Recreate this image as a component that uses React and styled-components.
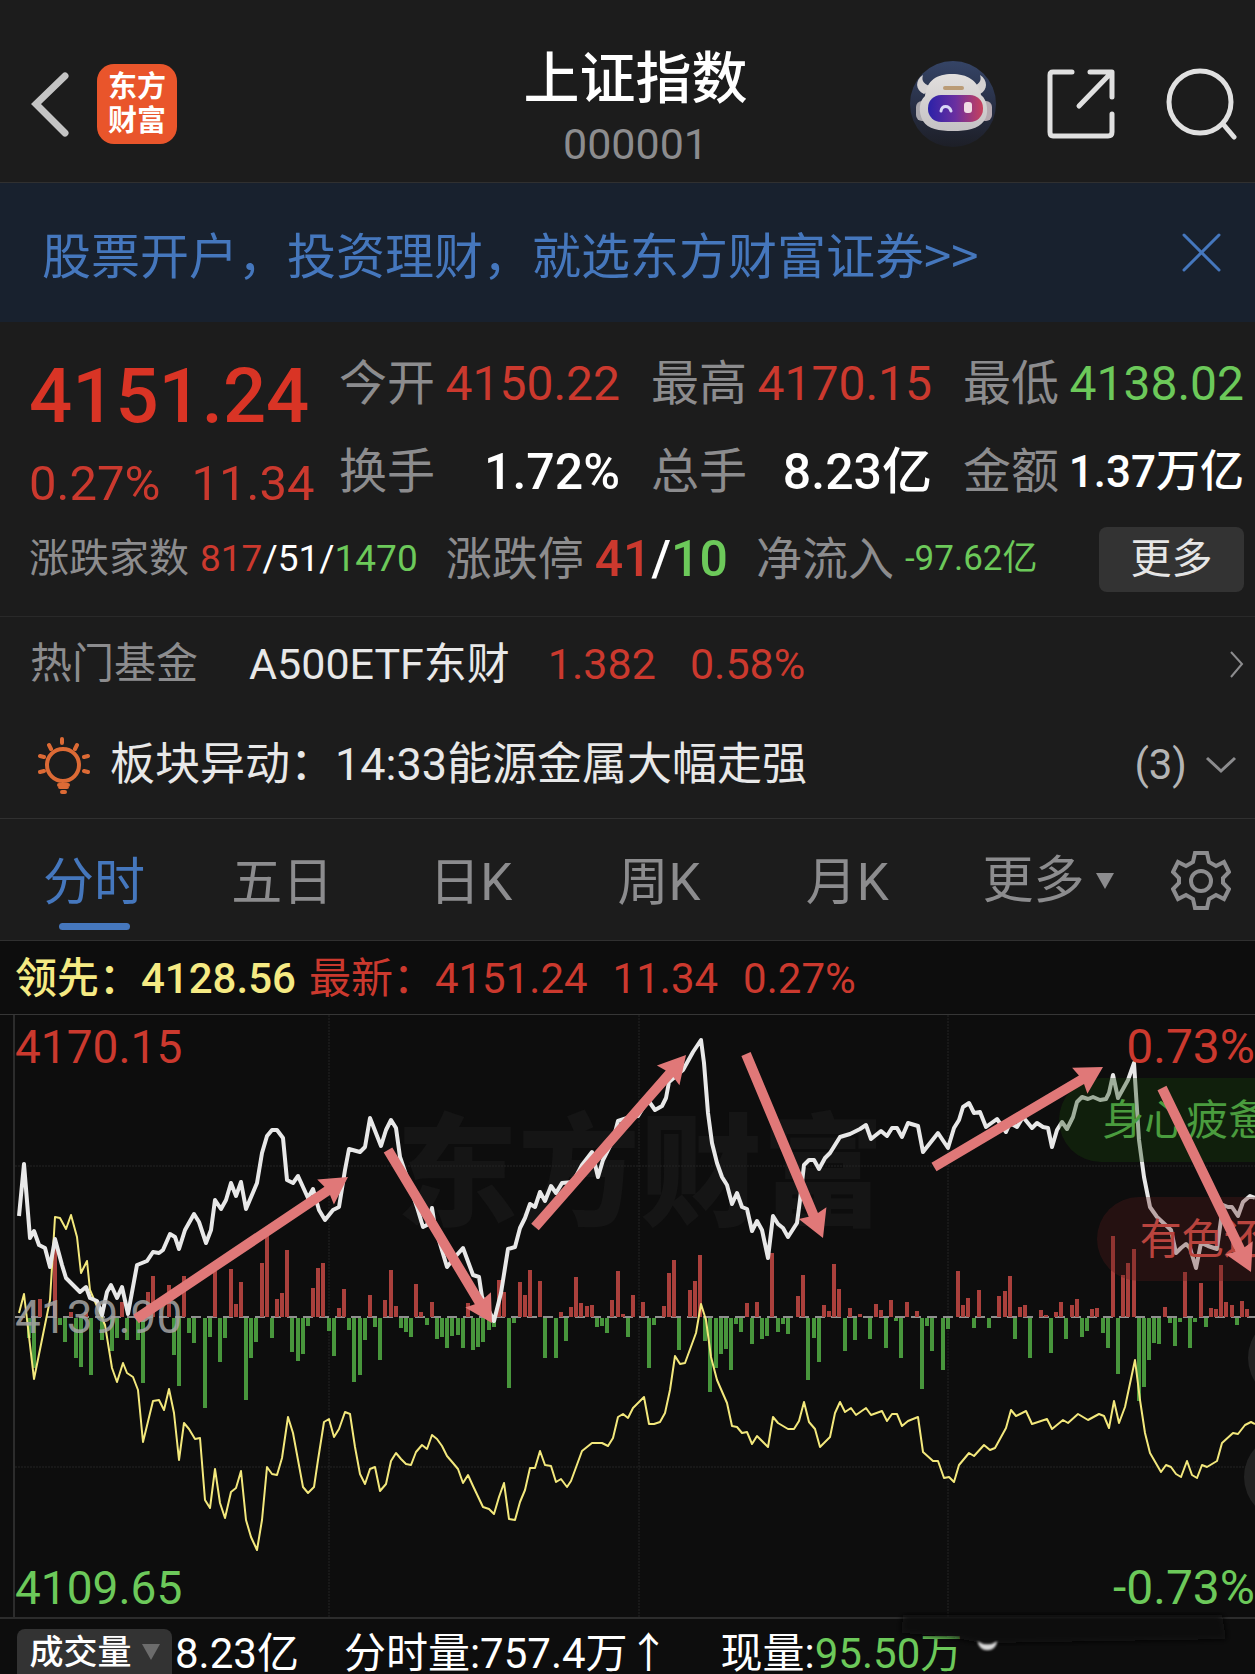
import React, { useState } from 'react'
import styled, { createGlobalStyle } from 'styled-components'

const red = '#cb392e'
const green = '#6cc95a'
const grey = '#8c8c8e'
const blue = '#4577bd'
const line = '#303030'
const panel = '#1c1c1c'
const dark = '#0d0d0d'

const GlobalStyle = createGlobalStyle`
* {
    box-sizing: border-box;
}
body {
    margin: 0;
    background: ${dark};
    color: #fff;
    font-family: Roboto, "Noto Sans CJK SC", sans-serif;
}
button {
    margin: 0;
    padding: 0;
    border: 0;
    background: none;
    color: inherit;
    font: inherit;
    cursor: pointer;
}
svg {
    display: block;
}
h1, p, dl, dt, dd {
    margin: 0;
    font-weight: 400;
}
`

const Page = styled.main`
display: flex;
flex-direction: column;
overflow: hidden;
white-space: nowrap;
`

const Header = styled.header`
display: grid;
grid-template-columns: 1fr auto 1fr;
height: 183px;
padding: 25px 18px 0 30px;
background: ${panel};
border-bottom: 1px solid ${line};
`

const HeaderSide = styled.div`
display: flex;
align-items: center;
justify-content: ${props => props.$end ? 'flex-end' : 'flex-start'};
gap: ${props => props.$end ? '50px' : '26px'};
`

const Logo = styled.a`
display: flex;
flex-direction: column;
align-items: center;
justify-content: center;
width: 80px;
height: 80px;
border-radius: 17px;
background: #e9552b;
color: #fff;
font-size: 29px;
line-height: 34px;
font-weight: 700;
text-decoration: none;
`

const Title = styled.div`
display: flex;
flex-direction: column;
align-items: center;
padding-left: 4px;
h1{
font-size: 56px;
line-height: 64px;
padding-top: 22px;
font-weight: 500;
}
p{
color: ${grey};
font-size: 43px;
line-height: 66px;
}
`

const Banner = styled.section`
display: flex;
align-items: center;
justify-content: space-between;
height: 139px;
padding: 0 34px 0 42px;
background: #18212e;
color: ${blue};
a{
color: inherit;
font-family: "Noto Sans CJK SC", sans-serif;
font-size: 49px;
line-height: 64px;
text-decoration: none;
}
`

const Quote = styled.section`
display: flex;
flex-direction: column;
padding: 15px 11px 14px 29px;
background: ${panel};
border-bottom: 1px solid #292929;
`

const QuoteTop = styled.div`
display: flex;
`

const Price = styled.div`
display: flex;
flex-direction: column;
gap: 28px;
flex: none;
width: 310px;
padding-top: 29px;
color: ${red};
line-height: 60px;
strong{
font-size: 76px;
font-weight: 500;
color: #d93425;
}
p{
display: flex;
gap: 31px;
font-size: 49px;
}
`

const Stats = styled.dl`
display: grid;
flex: 1;
grid-template-columns: repeat(3, 1fr);
column-gap: 31px;
padding-top: 3px;
line-height: 88px;
div{
display: flex;
justify-content: space-between;
}
dt{
color: ${grey};
font-size: 48px;
}
`

const Value = styled.dd`
color: ${props => props.$color || '#fff'};
font-size: ${props => props.$size || 48}px;
font-weight: ${props => props.$color ? 400 : 500};
`

const Breadth = styled.div`
display: flex;
align-items: center;
gap: 28px;
height: 86px;
line-height: 60px;
`

const BreadthItem = styled.p`
display: flex;
align-items: center;
gap: 11px;
color: ${grey};
font-size: ${props => props.$label}px;
span{
font-size: ${props => props.$value}px;
font-weight: ${props => props.$value > 40 ? 500 : 400};
}
`

const Tint = styled.i`
font-style: normal;
color: ${props => props.$color};
`

const MoreButton = styled.button`
width: 145px;
height: 65px;
margin-left: auto;
border-radius: 8px;
background: #333;
color: #e6e6e6;
font-size: 41px;
line-height: 60px;
`

const FundRow = styled.a`
display: flex;
align-items: center;
height: 92px;
padding: 2px 11px 0 30px;
background: ${panel};
color: ${red};
font-size: 43px;
line-height: 60px;
text-decoration: none;
small{
font-size: 42px;
color: ${grey};
margin-right: 51px;
}
b{
font-weight: 400;
color: #e8e8e8;
margin-right: 38px;
}
span{
margin-right: 34px;
}
svg{
margin-left: auto;
}
`

const AlertRow = styled.div`
display: flex;
align-items: center;
height: 110px;
padding: 2px 18px 0 36px;
background: ${panel};
border-bottom: 1px solid ${line};
color: #e8e8e8;
font-size: 45px;
line-height: 60px;
p{
padding-left: 17px;
}
button{
display: flex;
align-items: center;
gap: 18px;
margin-left: auto;
color: #b4b4b4;
font-size: 42px;
}
`

const Tabs = styled.nav`
display: grid;
grid-template-columns: repeat(6, 3fr) 2fr;
height: 122px;
background: ${panel};
border-bottom: 1px solid ${line};
`

const Tab = styled.button`
display: flex;
flex-direction: column;
align-items: center;
padding-top: 28px;
color: ${props => props.$on ? blue : grey};
font-size: 51px;
line-height: 72px;
&::after{
content: "";
width: 71px;
height: 7px;
margin-top: 4px;
border-radius: 4px;
background: ${props => props.$on ? blue : 'transparent'};
}
`

const TabMore = styled.button`
display: flex;
align-items: center;
justify-content: flex-end;
gap: 11px;
padding: 2px 16px 0 0;
color: ${grey};
font-size: 51px;
line-height: 72px;
`

const GearButton = styled.button`
display: flex;
align-items: center;
justify-content: flex-end;
padding-right: 24px;
`

const Legend = styled.div`
display: flex;
align-items: center;
height: 74px;
padding: 2px 0 0 15px;
border-bottom: 1px solid #363636;
color: ${red};
font-size: 42px;
line-height: 60px;
span{
margin-right: 25px;
}
span:first-child{
margin-right: 13px;
color: #f5ea83;
font-weight: 500;
}
`

const Chart = styled.section`
position: relative;
border-bottom: 2px solid #2c2c2c;
svg{
width: 100%;
}
`

const AxisLabel = styled.span`
position: absolute;
color: ${props => props.$color};
font-size: 46px;
line-height: 46px;
${props => props.$right ? 'right: 0;' : 'left: 15px;'}
${props => props.$right && 'font-size: 48px;'}
${props => props.$at}
`

const Bullet = styled.span`
position: absolute;
top: ${props => props.$top};
left: ${props => props.$left};
right: 0;
height: 84px;
padding-left: 43px;
border-radius: 42px 0 0 42px;
background: ${props => props.$back};
color: ${props => props.$color};
font-size: 42px;
line-height: 86px;
overflow: hidden;
`

const Arrows = styled.svg`
position: absolute;
top: 0;
left: 0;
`

const Volume = styled.footer`
position: relative;
display: flex;
align-items: flex-end;
height: 56px;
font-size: 42px;
line-height: 42px;
font-weight: 500;
p{
margin-right: 45px;
}
p:last-of-type{
margin-left: 6px;
}
`

const VolumeButton = styled.button`
display: flex;
align-items: center;
justify-content: center;
gap: 10px;
width: 155px;
height: 46px;
margin: 0 3px 0 17px;
border-radius: 8px 8px 0 0;
background: #333;
font-size: 34px;
`

const Smudge = styled.svg`
position: absolute;
top: -14px;
left: 71%;
width: 28%;
`

// [minute, size]: up bars stand on the zero line, down bars hang from it
const upBars = [
    [4, 18], [7, 78], [10, 5], [13, 5], [20, 15], [25, 25], [26, 41], [29, 32], [32, 41], [38, 46],
    [41, 48], [42, 13], [43, 35], [47, 54], [48, 83], [50, 18], [51, 24], [52, 67], [57, 29], [58, 49],
    [59, 54], [62, 9], [63, 28], [68, 22], [71, 17], [72, 47], [73, 11], [77, 33], [78, 5], [80, 15],
    [87, 14], [93, 37], [94, 25], [97, 35], [98, 22], [99, 47], [101, 36], [105, 5], [107, 10], [108, 40],
    [109, 14], [110, 11], [111, 12], [115, 17], [116, 46], [117, 3], [119, 22], [121, 15], [125, 11],
    [126, 44], [127, 57], [130, 27], [131, 36], [132, 62], [141, 14], [143, 15], [146, 64], [151, 21],
    [152, 42], [156, 12], [157, 6], [158, 53], [159, 28], [161, 9], [163, 3], [166, 13], [167, 7],
    [169, 17], [172, 15], [174, 6], [182, 46], [183, 12], [184, 19], [186, 27], [190, 21], [191, 26],
    [192, 41], [194, 10], [195, 12], [198, 7], [199, 2], [201, 5], [202, 15], [204, 12], [205, 18],
    [208, 8], [209, 9], [212, 81], [214, 42], [215, 54], [216, 68], [222, 10], [226, 45], [229, 34],
    [231, 9], [232, 8], [233, 52], [234, 15], [235, 12], [237, 16], [238, 8],
]

const downBars = [
    [2, 20], [3, 50], [8, 7], [9, 24], [11, 40], [12, 49], [14, 57], [16, 22], [18, 33], [19, 20],
    [21, 22], [23, 22], [24, 65], [30, 37], [31, 68], [33, 15], [34, 25], [36, 90], [37, 19], [39, 44],
    [40, 20], [44, 82], [45, 40], [46, 24], [49, 20], [53, 34], [54, 43], [55, 36], [56, 8], [60, 13],
    [61, 38], [64, 12], [65, 64], [66, 57], [67, 22], [69, 9], [70, 42], [74, 10], [75, 14], [76, 19],
    [79, 7], [81, 21], [82, 19], [83, 30], [84, 18], [85, 17], [86, 30], [88, 32], [89, 29], [90, 24],
    [91, 12], [92, 9], [95, 70], [96, 5], [102, 40], [104, 40], [106, 23], [112, 9], [113, 8], [114, 15],
    [118, 19], [122, 50], [123, 7], [128, 32], [133, 23], [134, 74], [135, 50], [136, 36], [137, 31],
    [138, 52], [139, 6], [140, 14], [142, 26], [144, 21], [145, 18], [147, 14], [148, 6], [149, 16],
    [153, 62], [154, 20], [155, 44], [160, 33], [162, 22], [165, 21], [168, 30], [170, 3], [171, 40],
    [175, 71], [176, 8], [177, 33], [179, 52], [180, 11], [185, 10], [188, 10], [193, 21], [196, 40],
    [200, 35], [203, 21], [206, 19], [207, 13], [210, 15], [211, 30], [213, 56], [217, 83], [218, 69],
    [219, 42], [220, 25], [221, 26], [223, 5], [224, 28], [225, 4], [227, 30], [228, 4], [230, 9], [236, 7],
]

const pricePoints = `19,201 24,149 30,223 34,216 39,230 45,233 50,252 55,224 62,250 66,263 80,277 86,272
90,283 97,286 102,300 107,277 111,270 117,283 122,272 128,299 137,250 147,246 153,237 159,238 163,235
170,219 175,222 179,234 185,215 194,199 199,207 206,228 211,215 215,185 221,194 226,185 231,168 236,181
241,167 246,194 257,168 262,138 267,121 272,115 277,115 283,123 287,165 293,168 298,161 303,172 308,183
313,174 319,195 325,205 333,195 339,192 345,155 349,134 360,137 365,132 370,103 381,131 386,115 391,105
396,113 400,142 417,192 423,212 427,210 432,193 435,212 447,252 455,242 463,233 473,260 479,262 482,282
494,306 501,278 508,234 515,232 520,213 525,203 530,189 535,192 540,177 545,186 551,171 556,178 562,168
573,167 582,150 592,137 598,162 603,145 613,125 618,106 630,102 638,101 648,85 655,95 662,91 666,83
669,67 683,55 693,37 701,25 704,48 708,98 712,128 717,148 722,162 727,170 732,189 737,178 742,192
747,194 752,216 757,206 762,215 768,243 773,201 778,209 783,213 788,222 797,208 800,185 804,150 809,145
814,145 819,154 825,143 830,138 840,122 850,119 860,114 866,110 871,124 881,116 887,121 892,113 897,113
902,122 908,108 918,111 923,137 938,118 948,133 954,113 959,105 963,92 969,88 974,98 980,97 986,112
997,104 1006,117 1010,108 1017,112 1023,102 1032,113 1037,108 1043,112 1048,113 1052,132 1057,115
1062,107 1067,114 1073,102 1077,87 1082,82 1088,84 1093,82 1100,85 1106,84 1109,78 1113,60 1118,83
1128,65 1134,48 1139,125 1144,162 1150,192 1157,202 1171,215 1176,238 1181,233 1186,229 1190,233
1196,253 1201,228 1208,231 1217,234 1223,190 1228,192 1232,192 1238,201 1243,187 1250,181 1255,183`

const leadPoints = `19,298 24,279 34,364 50,285 55,202 60,203 66,214 71,200 77,222 81,258 87,246 90,275
105,310 112,353 117,367 123,348 127,358 133,362 138,375 143,427 153,386 159,385 164,395 169,374 174,398
179,445 184,408 189,414 195,424 200,423 205,485 210,493 215,454 220,488 225,503 231,477 236,473 241,456
246,505 251,522 257,535 262,505 267,452 272,459 277,460 282,443 288,402 293,418 303,472 308,478 314,472
318,445 324,407 329,404 334,422 339,414 345,397 350,399 355,432 360,459 365,469 370,454 375,452 380,476
386,469 391,446 396,438 401,444 406,449 411,450 416,437 422,430 427,434 432,420 437,424 442,431 447,441
453,448 458,454 463,468 468,460 473,471 483,492 489,494 494,499 499,482 504,468 509,504 515,505 520,487
525,475 530,453 535,453 540,436 545,450 551,451 556,467 561,464 567,472 571,466 582,436 592,428 602,428
608,431 613,423 618,402 623,399 628,403 633,393 644,382 649,409 654,409 660,407 665,398 670,375 675,341
680,349 685,348 696,318 701,289 706,305 711,342 717,365 727,388 732,411 737,412 742,418 747,417 752,429
757,421 768,432 773,402 778,408 788,414 794,414 799,406 804,387 809,407 815,414 820,432 830,422 835,398
840,387 845,397 851,393 856,400 866,393 871,400 882,396 887,406 892,399 897,399 902,411 908,406 918,402
923,437 933,446 938,446 944,463 949,462 954,467 959,450 969,438 974,441 984,430 990,435 995,433
1006,413 1011,395 1016,401 1026,396 1032,409 1047,404 1052,414 1063,405 1068,408 1078,399 1088,405
1099,399 1104,401 1109,413 1114,386 1119,408 1125,392 1135,345 1140,385 1145,418 1150,438 1161,457
1166,450 1171,452 1176,459 1181,462 1187,446 1192,460 1197,463 1202,450 1207,452 1217,446 1222,428
1233,418 1238,419 1245,410 1251,407 1255,409`

// tail x, tail y, tip x, tip y
const trends = [
    [136, 304, 348, 162],
    [388, 135, 492, 308],
    [535, 212, 686, 40],
    [746, 39, 823, 223],
    [934, 152, 1103, 52],
    [1162, 73, 1251, 257],
]

const arrowPoints = ([x1, y1, x2, y2]) => {
    const length = Math.hypot(x2 - x1, y2 - y1)
    const ux = (x2 - x1) / length
    const uy = (y2 - y1) / length
    const at = (along, side) => `${x1 + ux * along - uy * side},${y1 + uy * along + ux * side}`
    const neck = length - 25
    return [at(0, 5), at(neck, 5), at(neck - 2, 15), at(length, 0), at(neck - 2, -15), at(neck, -5), at(0, -5)].join(' ')
}

const barX = (minute) => Math.round(17 + minute * 5.16)

const stats = [
    { label: '今开', value: '4150.22', color: red },
    { label: '最高', value: '4170.15', color: red },
    { label: '最低', value: '4138.02', color: green },
    { label: '换手', value: '1.72%', size: 50 },
    { label: '总手', value: '8.23亿', size: 50 },
    { label: '金额', value: '1.37万亿', size: 44 },
]

const tabNames = ['分时', '五日', '日K', '周K', '月K']

function Robot() {
    return (
        <svg width="88" height="88" viewBox="0 0 88 88">
            <defs>
                <linearGradient id="sky" x1="0" y1="0" x2="0" y2="1">
                    <stop offset="0" stopColor="#354466" />
                    <stop offset="0.6" stopColor="#262c40" />
                    <stop offset="1" stopColor="#1d1f27" />
                </linearGradient>
                <linearGradient id="visor" x1="0" y1="0" x2="1" y2="0">
                    <stop offset="0" stopColor="#2b22a8" />
                    <stop offset="0.5" stopColor="#6a2fa0" />
                    <stop offset="1" stopColor="#c8405c" />
                </linearGradient>
                <linearGradient id="helmet" x1="0" y1="0" x2="0" y2="1">
                    <stop offset="0" stopColor="#e2dfdd" />
                    <stop offset="1" stopColor="#c4c1c4" />
                </linearGradient>
            </defs>
            <circle cx="44" cy="44" r="43" fill="url(#sky)" />
            <path d="M14 15 C6 20 6 30 15 34 L25 27 C15 25 12 21 14 15 Z" fill="#d5d2d2" />
            <path d="M71 15 C79 20 79 30 71 34 L61 27 C70 25 73 21 71 15 Z" fill="#d5d2d2" />
            <rect x="7" y="41" width="13" height="20" rx="6" fill="#aaa7ad" />
            <rect x="70" y="41" width="13" height="20" rx="6" fill="#b5a9b0" />
            <path d="M16 36 C18 20 28 14 43 14 C58 14 69 20 72 35 C79 40 80 55 75 61 C69 69 58 71 44 71 C30 71 19 69 14 61 C9 52 10 41 16 36 Z" fill="url(#helmet)" />
            <rect x="34" y="26" width="21" height="4" rx="2" fill="#ba9b76" />
            <rect x="19" y="35" width="55" height="27" rx="13" fill="url(#visor)" />
            <path d="M32 51 C33 45 40 45 42 51" fill="none" stroke="#d9d6f5" strokeWidth="3" strokeLinecap="round" />
            <rect x="55" y="42" width="8" height="11" rx="3" fill="#f0dce4" />
        </svg>
    )
}

function Bulb() {
    return (
        <svg width="57" height="58" viewBox="0 0 57 58" fill="none" stroke="#dc6a35" strokeWidth="4" strokeLinecap="round" aria-hidden="true">
            <circle cx="27" cy="29" r="16" />
            <path d="M26 3 V7 M13 9 L15 13 M41 9 L39 13 M4 20 L8 21 M52 20 L48 21 M4 36 L8 35 M52 36 L48 35" />
            <path d="M23 49 H32 M24 51 H31 M26 56 H29" />
        </svg>
    )
}

function Gear() {
    return (
        <svg width="60" height="60" viewBox="0 0 60 60" fill="none" stroke={grey} strokeWidth="4" aria-hidden="true">
            <path d="M24 3 H36 L38 12 L45 16 L53 12 L58 22 L52 28 V33 L58 39 L53 49 L45 45 L38 49 L36 58 H24 L22 49 L15 45 L7 49 L2 39 L8 33 V28 L2 22 L7 12 L15 16 L22 12 Z" />
            <circle cx="30" cy="31" r="10" />
        </svg>
    )
}

function MinuteChart() {
    return (
        <svg viewBox="0 0 1255 602" role="img" aria-label="上证指数分时走势">
            <text x="396" y="201" fontSize="122" fontWeight="900" fill="#151515">东方财富</text>
            <path d="M14 0 V602" stroke="#2c2c2c" strokeWidth="2" />
            <path d="M329 0 V602 M639 0 V602 M948 0 V602 M15 151 H1255 M15 452 H1255" stroke="#242424" strokeDasharray="2 1" />
            <path d="M15 302 H1255" stroke="#8f8f8f" strokeWidth="2" strokeDasharray="10 6" />
            {upBars.map(([minute, size]) => (
                <rect key={minute} x={barX(minute)} y={302 - size} width="4" height={size} fill="#aa403c" />
            ))}
            {downBars.map(([minute, size]) => (
                <rect key={minute} x={barX(minute)} y="303" width="4" height={size} fill="#48963c" />
            ))}
            <polyline points={leadPoints} fill="none" stroke="#f3e87c" strokeWidth="2" strokeLinejoin="round" />
            <polyline points={pricePoints} fill="none" stroke="#e8e8e8" strokeWidth="4" strokeLinejoin="round" />
            <circle cx="1291" cy="343" r="43" fill="#222" />
            <circle cx="1287" cy="462" r="43" fill="#222" />
        </svg>
    )
}

export default function App() {
    const [tab, setTab] = useState('分时')
    const [showBanner, setShowBanner] = useState(true)

    return (
        <Page>
            <GlobalStyle />
            <Header>
                <HeaderSide>
                    <button aria-label="返回">
                        <svg width="41" height="68" viewBox="0 0 41 68" fill="none" stroke="#c4c4c4" strokeWidth="7">
                            <path d="M35 6 L6 34 L35 63" strokeLinecap="round" />
                        </svg>
                    </button>
                    <Logo href="#home"><span>东方</span><span>财富</span></Logo>
                </HeaderSide>
                <Title>
                    <h1>上证指数</h1>
                    <p>000001</p>
                </Title>
                <HeaderSide $end>
                    <button aria-label="智能助手"><Robot /></button>
                    <button aria-label="分享">
                        <svg width="68" height="70" viewBox="0 0 68 70" fill="none" stroke="#e0e0e0" strokeWidth="5" strokeLinecap="round" strokeLinejoin="round">
                            <path d="M25 3 H6 Q3 3 3 6 V63 Q3 67 6 67 H61 Q65 67 65 63 V45" />
                            <path d="M43 3 H65 V28 M64 4 L32 37" />
                        </svg>
                    </button>
                    <button aria-label="搜索">
                        <svg width="72" height="72" viewBox="0 0 72 72" fill="none" stroke="#e0e0e0" strokeWidth="5" strokeLinecap="round">
                            <circle cx="35" cy="34" r="31" />
                            <path d="M58 56 L69 69" />
                        </svg>
                    </button>
                </HeaderSide>
            </Header>

            {showBanner && (
                <Banner>
                    <a href="#open">股票开户，投资理财，就选东方财富证券&gt;&gt;</a>
                    <button aria-label="关闭" onClick={() => setShowBanner(false)}>
                        <svg width="39" height="39" viewBox="0 0 39 39" stroke={blue} strokeWidth="3" strokeLinecap="round">
                            <path d="M2 2 L37 37 M37 2 L2 37" />
                        </svg>
                    </button>
                </Banner>
            )}

            <Quote>
                <QuoteTop>
                    <Price>
                        <strong>4151.24</strong>
                        <p><span>0.27%</span><span>11.34</span></p>
                    </Price>
                    <Stats>
                        {stats.map(item => (
                            <div key={item.label}>
                                <dt>{item.label}</dt>
                                <Value $color={item.color} $size={item.size}>{item.value}</Value>
                            </div>
                        ))}
                    </Stats>
                </QuoteTop>
                <Breadth>
                    <BreadthItem $label={40} $value={37}>
                        涨跌家数
                        <span><Tint $color={red}>817</Tint><Tint $color="#fff">/51/</Tint><Tint $color={green}>1470</Tint></span>
                    </BreadthItem>
                    <BreadthItem $label={46} $value={50}>
                        涨跌停
                        <span><Tint $color={red}>41</Tint><Tint $color="#fff">/</Tint><Tint $color={green}>10</Tint></span>
                    </BreadthItem>
                    <BreadthItem $label={46} $value={35}>
                        净流入
                        <span><Tint $color={green}>-97.62亿</Tint></span>
                    </BreadthItem>
                    <MoreButton>更多</MoreButton>
                </Breadth>
            </Quote>

            <FundRow href="#fund">
                <small>热门基金</small>
                <b>A500ETF东财</b>
                <span>1.382</span>
                <span>0.58%</span>
                <svg width="15" height="29" viewBox="0 0 15 29" fill="none" stroke={grey} strokeWidth="2">
                    <path d="M2 2 L13 14 L2 27" />
                </svg>
            </FundRow>

            <AlertRow>
                <Bulb />
                <p>板块异动：14:33能源金属大幅走强</p>
                <button>
                    (3)
                    <svg width="32" height="18" viewBox="0 0 32 18" fill="none" stroke={grey} strokeWidth="3">
                        <path d="M2 2 L16 15 L30 2" />
                    </svg>
                </button>
            </AlertRow>

            <Tabs>
                {tabNames.map(name => (
                    <Tab key={name} $on={name === tab} onClick={() => setTab(name)}>{name}</Tab>
                ))}
                <TabMore>
                    更多
                    <svg width="18" height="16" viewBox="0 0 18 16" fill={grey}><path d="M0 0 H18 L9 16 Z" /></svg>
                </TabMore>
                <GearButton aria-label="设置"><Gear /></GearButton>
            </Tabs>

            <Legend>
                <span>领先：4128.56</span>
                <span>最新：4151.24</span>
                <span>11.34</span>
                <span>0.27%</span>
            </Legend>

            <Chart>
                <MinuteChart />
                <AxisLabel $color={red} $at="top: 9px;">4170.15</AxisLabel>
                <AxisLabel $color="rgba(165, 165, 165, 0.85)" $at="top: 279px;">4139.90</AxisLabel>
                <AxisLabel $color={green} $at="bottom: 6px;">4109.65</AxisLabel>
                <AxisLabel $color={red} $right $at="top: 9px;">0.73%</AxisLabel>
                <AxisLabel $color={green} $right $at="bottom: 6px;">-0.73%</AxisLabel>
                <Bullet $top="63px" $left="84.4%" $back="rgba(22, 66, 12, 0.35)" $color="#4a9c3e">身心疲惫</Bullet>
                <Bullet $top="182px" $left="87.4%" $back="rgba(90, 28, 28, 0.32)" $color="#b9443e">有色还</Bullet>
                <Arrows viewBox="0 0 1255 602" aria-hidden="true">
                    {trends.map(trend => (
                        <polygon key={trend[0]} points={arrowPoints(trend)} fill="#e07878" />
                    ))}
                </Arrows>
            </Chart>

            <Volume>
                <VolumeButton>
                    成交量
                    <svg width="18" height="16" viewBox="0 0 18 16" fill="#6c6c6c"><path d="M0 0 H18 L9 16 Z" /></svg>
                </VolumeButton>
                <p>8.23亿</p>
                <p>分时量:757.4万↑</p>
                <p>现量:<Tint $color={green}>95.50万</Tint></p>
                <Smudge viewBox="0 0 350 50" aria-hidden="true">
                    <defs>
                        <filter id="soft"><feGaussianBlur stdDeviation="3" /></filter>
                        <filter id="edge"><feGaussianBlur stdDeviation="1" /></filter>
                    </defs>
                    <path d="M12 10 H330 L334 34 L90 38 L60 32 L10 28 Z" fill="#0a0a0a" filter="url(#soft)" />
                    <path d="M86 36 Q96 42 106 36 Q104 45 96 45 Q88 45 86 36 Z" fill="#d8d8d8" filter="url(#edge)" />
                </Smudge>
            </Volume>
        </Page>
    )
}
